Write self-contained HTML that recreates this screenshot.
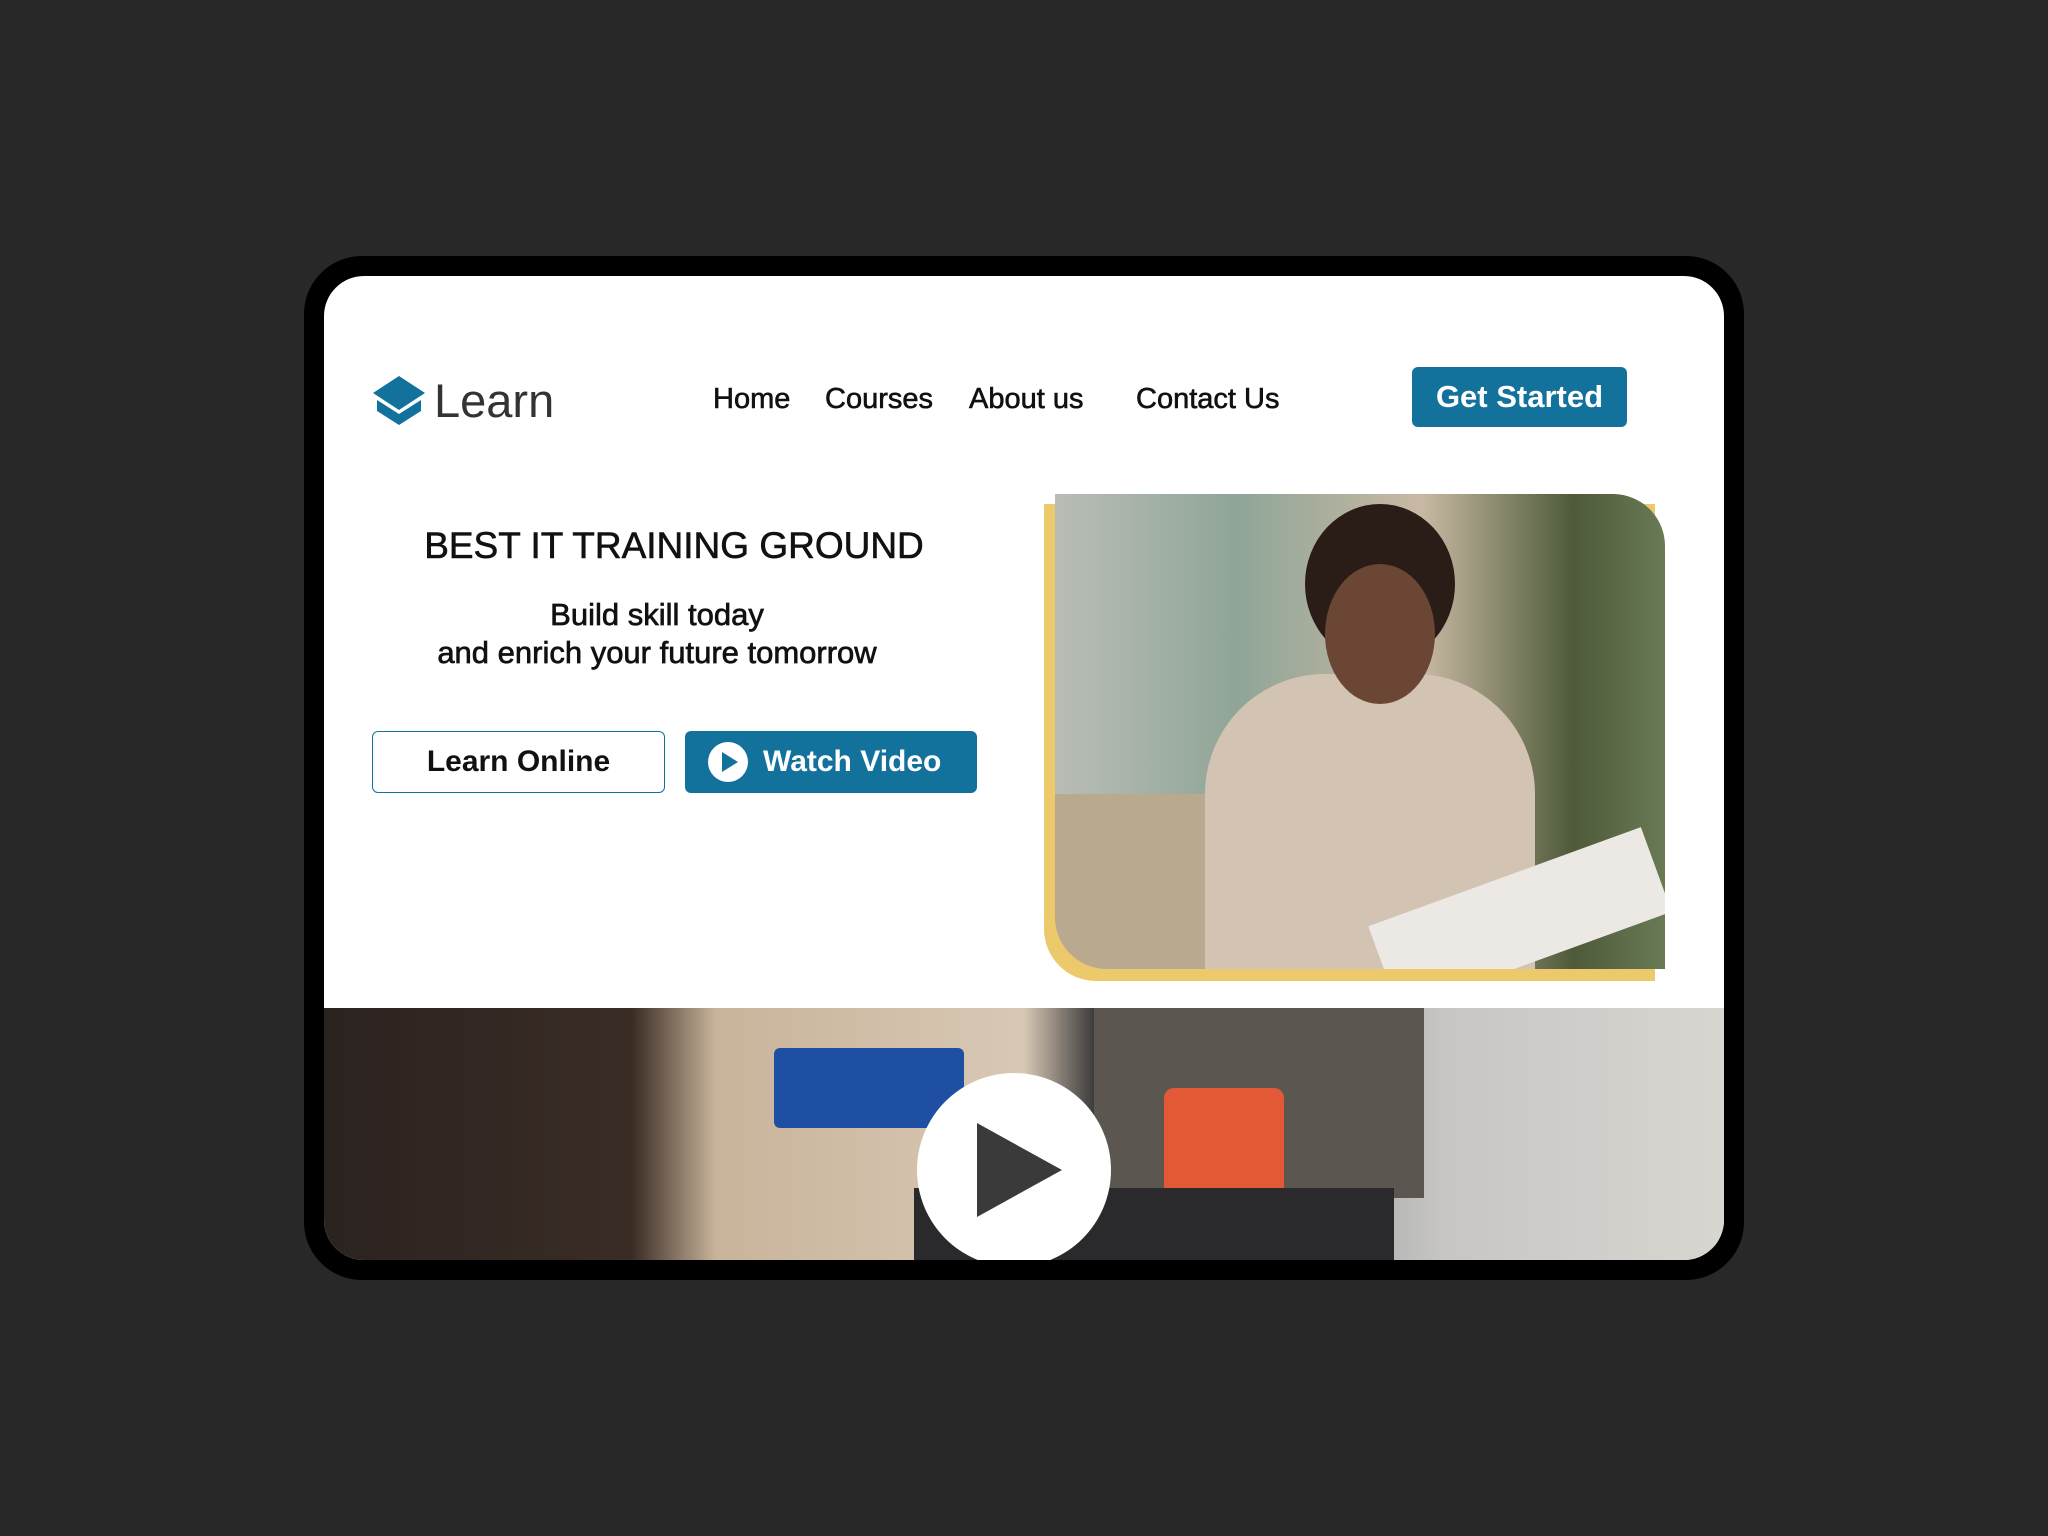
<!DOCTYPE html>
<html><head><meta charset="utf-8"><style>
*{margin:0;padding:0;box-sizing:border-box}
body{width:2048px;height:1536px;background:#282828;position:relative;overflow:hidden;font-family:"Liberation Sans",Roboto,sans-serif}
.frame{position:absolute;left:304px;top:256px;width:1440px;height:1024px;background:#000;border-radius:58px}
.screen{position:absolute;left:324px;top:276px;width:1400px;height:984px;background:#fff;border-radius:40px;overflow:hidden}
.a{position:absolute}
.nav{font-size:29px;color:#111;-webkit-text-stroke:0.6px #111}
.btn{position:absolute;border-radius:6px;font-size:30px;font-weight:bold;display:flex;align-items:center;justify-content:center}
</style></head><body>
<div class="frame"></div>
<div class="screen">
 <svg class="a" style="left:48px;top:100px" width="54" height="50" viewBox="0 0 54 50">
  <polygon points="27,0 53,17 27,34 1,17" fill="#12729c"/>
  <polygon points="5,24 27,38 49,24 49,35 27,49 5,35" fill="#12729c"/>
 </svg>
 <div class="a" style="left:110px;top:97px;font-size:47px;color:#333">Learn</div>
 <div class="a nav" style="left:389px;top:107px">Home</div>
 <div class="a nav" style="left:501px;top:107px">Courses</div>
 <div class="a nav" style="left:645px;top:107px">About us</div>
 <div class="a nav" style="left:812px;top:107px">Contact Us</div>
 <div class="btn" style="left:1088px;top:91px;width:215px;height:60px;background:#12729c;color:#fff;font-size:31px">Get Started</div>
 <div class="a" style="left:0;width:700px;text-align:center;top:249px;font-size:37px;color:#111;-webkit-text-stroke:0.6px #111">BEST IT TRAINING GROUND</div>
 <div class="a" style="left:0;width:666px;text-align:center;top:320px;font-size:31px;color:#111;line-height:38px;-webkit-text-stroke:0.7px #111">Build skill today<br>and enrich your future tomorrow</div>
 <div class="btn" style="left:48px;top:455px;width:293px;height:62px;border:1.5px solid #12729c;color:#111">Learn Online</div>
 <div class="btn" style="left:361px;top:455px;width:292px;height:62px;background:#12729c;color:#fff;justify-content:flex-start;padding-left:22px">
  <svg width="42" height="42" viewBox="0 0 42 42" style="margin-right:14px"><circle cx="21" cy="21" r="20" fill="#fff"/><polygon points="15,11 31,21 15,31" fill="#12729c"/></svg>Watch Video</div>
 <div class="a" style="left:720px;top:228px;width:611px;height:477px;background:#ecc96a;border-radius:0 0 0 52px"></div>
 <div class="a" style="left:731px;top:218px;width:610px;height:475px;border-radius:0 52px 0 52px;overflow:hidden;background:linear-gradient(90deg,#b9bdb6 0%,#8fa597 30%,#c9b9a4 60%,#4e5a3a 85%,#6a7a55 100%)">
  <div class="a" style="left:0;top:300px;width:230px;height:180px;background:#b8a98f"></div>
  <div class="a" style="left:150px;top:180px;width:330px;height:300px;background:#d2c3b3;border-radius:120px 120px 0 0"></div>
  <div class="a" style="left:250px;top:10px;width:150px;height:160px;background:#2a1c16;border-radius:50%"></div>
  <div class="a" style="left:270px;top:70px;width:110px;height:140px;background:#6b4635;border-radius:50%"></div>
  <div class="a" style="left:320px;top:380px;width:290px;height:90px;background:#ece9e4;transform:rotate(-20deg)"></div>
 </div>
 <div class="a" style="left:0;top:732px;width:1400px;height:252px;background:linear-gradient(90deg,#2b2320 0%,#3a2c25 22%,#c9b49b 28%,#d8c8b4 50%,#3c3b3c 55%,#8c8f93 65%,#c7c6c3 80%,#d9d6d1 100%)">
  <div class="a" style="left:450px;top:40px;width:190px;height:80px;background:#1f4fa3;border-radius:6px"></div>
  <div class="a" style="left:770px;top:0;width:330px;height:190px;background:#5b5650"></div>
  <div class="a" style="left:840px;top:80px;width:120px;height:120px;background:#e25a35;border-radius:10px"></div>
  <div class="a" style="left:590px;top:180px;width:480px;height:80px;background:#2a2a2c"></div>
  <svg class="a" style="left:593px;top:65px" width="194" height="194" viewBox="0 0 194 194"><circle cx="97" cy="97" r="97" fill="#fff"/><polygon points="60,50 145,97 60,144" fill="#3a3a3a"/></svg>
 </div>
</div>
</body></html>
